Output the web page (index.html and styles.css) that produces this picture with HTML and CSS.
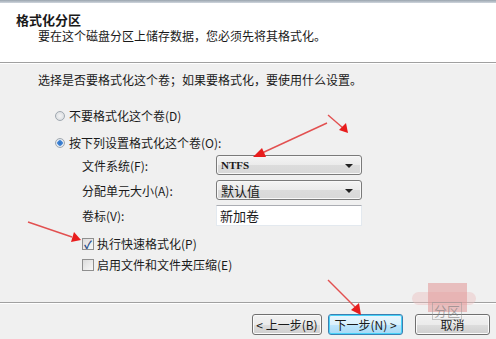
FILE: index.html
```html
<!DOCTYPE html>
<html lang="zh-CN">
<head>
    <meta charset="UTF-8">
    <title>格式化分区</title>
    <link rel="stylesheet" href="styles.css">
</head>
<body>
    <div id="wizard">
        <div class="top-bar"></div>
        <header class="head">
            <h1>格式化分区</h1>
            <p>要在这个磁盘分区上储存数据，您必须先将其格式化。</p>
        </header>

        <main class="content">
            <p class="lead">选择是否要格式化这个卷；如果要格式化，要使用什么设置。</p>

            <div class="radio"><span class="dot"></span>不要格式化这个卷(D)</div>
            <div class="radio on"><span class="dot"></span>按下列设置格式化这个卷(O):</div>

            <div class="fields">
                <span class="label">文件系统(F):</span>
                <div class="select mono">NTFS<span class="caret"></span></div>
                <span class="label">分配单元大小(A):</span>
                <div class="select">默认值<span class="caret"></span></div>
                <span class="label">卷标(V):</span>
                <div class="textbox">新加卷</div>
            </div>

            <div class="check on"><span class="box">&#10003;</span>执行快速格式化(P)</div>
            <div class="check"><span class="box"></span>启用文件和文件夹压缩(E)</div>
        </main>

        <footer class="foot">
            <button class="btn back">&lt; 上一步(B)</button>
            <button class="btn next">下一步(N) &gt;</button>
            <button class="btn cancel">取消</button>
        </footer>

        <!-- watermark and red arrows drawn over the dialog -->
        <div class="watermark">
            <span class="blob"></span>
            <span class="patch"></span>
            <span class="mark">分区</span>
        </div>
        <svg class="arrows" width="496" height="339" viewBox="0 0 496 339">
            <g stroke="#e25050" stroke-width="1.4" fill="none">
                <line x1="327" y1="123" x2="262" y2="153" />
                <line x1="328" y1="115" x2="343" y2="128" />
                <line x1="28" y1="222" x2="72" y2="237" />
                <line x1="328" y1="280" x2="355" y2="307" />
            </g>
            <g fill="#e81c1c">
                <polygon points="253,157 262,148 266,157" />
                <polygon points="348,133 339,130 346,123" />
                <polygon points="81,240 71,242 74,232" />
                <polygon points="361,315 351,310 359,303" />
            </g>
        </svg>
    </div>
</body>
</html>
```

FILE: styles.css
```css
body {
    margin: 0;
    font-family: "Noto Sans CJK SC", "Noto Sans", sans-serif;
    font-size: 12px;
    color: #1a1a1a;
    background-color: #f0f0f0;
}

#wizard {
    position: relative;
    width: 496px;
    height: 339px;
    overflow: hidden;
    background-color: #f0f0f0;
}

.top-bar {
    height: 3px;
    background: linear-gradient(#9aa4ae, #cfd6dd);
}

.head {
    height: 50px;
    padding-top: 9px;
    background-color: #ffffff;
    border-bottom: 1px solid #a0a0a0;
    box-shadow: 0 1px 0 #ffffff;
}

.head h1 {
    margin: 0 0 0 16px;
    font-size: 13px;
    line-height: 16px;
    font-weight: bold;
}

.head p {
    margin: 0 0 0 38px;
    line-height: 16px;
}

.content {
    padding: 9px 0 0 0;
    height: 230px;
}

.lead {
    margin: 0 0 20px 38px;
    line-height: 16px;
}

.radio {
    display: flex;
    align-items: center;
    gap: 2px;
    margin-left: 55px;
    height: 16px;
    line-height: 16px;
    margin-bottom: 11px;
}

.radio .dot {
    width: 10px;
    height: 10px;
    border-radius: 50%;
    border: 1px solid #a0a8b0;
    background: radial-gradient(#f4f4f4, #d4d8dc);
    box-sizing: border-box;
    margin-right: 2px;
}

.radio.on .dot {
    background: radial-gradient(circle, #2a6fc0 0, #4a8ad8 2.5px, #e8eef4 3px, #d0d6de 5px);
}

.fields {
    display: grid;
    grid-template-columns: 134px 146px;
    grid-auto-rows: 20px;
    row-gap: 5px;
    align-items: center;
    margin: -7px 0 11px 82px;
}

.select {
    position: relative;
    height: 20px;
    line-height: 19px;
    padding-left: 4px;
    box-sizing: border-box;
    border: 1px solid #7a7a7a;
    border-radius: 3px;
    background: linear-gradient(#f4f4f4 0, #ebebeb 50%, #dcdcdc 51%, #d8d8d8 100%);
    box-shadow: inset 0 0 0 1px #f8f8f8;
    font-size: 13px;
}

.select.mono {
    font-family: "Liberation Serif", serif;
    font-weight: bold;
    font-size: 11px;
}

.caret {
    position: absolute;
    right: 8px;
    top: 8px;
    border-left: 4px solid transparent;
    border-right: 4px solid transparent;
    border-top: 4px solid #222;
}

.textbox {
    height: 21px;
    line-height: 20px;
    padding-left: 3px;
    box-sizing: border-box;
    background-color: #ffffff;
    border: 1px solid #e3e9ef;
    border-top-color: #abadb3;
    font-size: 13px;
}

.check {
    display: flex;
    align-items: center;
    margin-left: 82px;
    height: 16px;
    line-height: 16px;
    margin-bottom: 5px;
}

.check .box {
    width: 12px;
    height: 12px;
    margin-right: 3px;
    box-sizing: border-box;
    border: 1px solid #8f8f8f;
    background: linear-gradient(135deg, #dcdcdc, #f8f8f8);
    color: #2a4f8a;
    font-size: 11px;
    line-height: 10px;
    text-align: center;
    font-weight: bold;
}

.foot {
    display: flex;
    justify-content: flex-end;
    align-items: flex-start;
    gap: 6px;
    height: 26px;
    padding: 11px 6px 0 0;
    border-top: 1px solid #a0a0a0;
    box-shadow: inset 0 1px 0 #ffffff;
}

.btn {
    height: 21px;
    width: 75px;
    padding: 0;
    font-family: inherit;
    font-size: 12px;
    color: #1a1a1a;
    border: 1px solid #707070;
    border-radius: 3px;
    background: linear-gradient(#f2f2f2 0, #ebebeb 50%, #dddddd 51%, #cfcfcf 100%);
    box-shadow: inset 0 0 0 1px #fbfbfb;
}

.btn.back {
    width: 70px;
}

.btn.next {
    border-color: #3c7fb1;
    background: linear-gradient(#eaf6fd 0, #d9f0fc 50%, #bee6fd 51%, #a7d9f5 100%);
    box-shadow: inset 0 0 0 1px #48d2f8;
}

.btn.cancel {
    margin-left: 6px;
}

.watermark {
    position: absolute;
    left: 412px;
    top: 283px;
    width: 64px;
    height: 38px;
}

.watermark .blob {
    position: absolute;
    left: 0;
    top: 9px;
    width: 64px;
    height: 13px;
    border-radius: 7px;
    background-color: rgba(236, 190, 190, 0.45);
}

.watermark .patch {
    position: absolute;
    left: 16px;
    top: 0;
    width: 39px;
    height: 29px;
    background-color: rgba(226, 150, 150, 0.55);
}

.watermark .mark {
    position: absolute;
    left: 20px;
    top: 19px;
    padding: 0 1px;
    font-size: 13px;
    line-height: 16px;
    color: rgba(120, 120, 120, 0.6);
    border: 1px solid rgba(150, 150, 150, 0.5);
}

.arrows {
    position: absolute;
    left: 0;
    top: 0;
    pointer-events: none;
}
```
